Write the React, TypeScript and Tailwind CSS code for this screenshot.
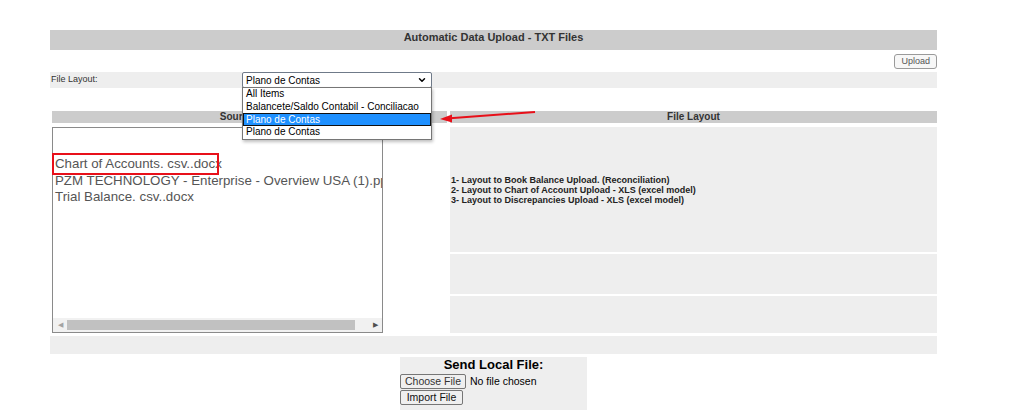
import { ChevronDown } from 'lucide-react';

const options = ['All Items', 'Balancete/Saldo Contabil - Conciliacao', 'Plano de Contas', 'Plano de Contas'];

const files = [
  'Chart of Accounts. csv..docx',
  'PZM TECHNOLOGY - Enterprise - Overview USA (1).pptx',
  'Trial Balance. csv..docx',
];

const layouts = [
  '1- Layout to Book Balance Upload. (Reconciliation)',
  '2- Layout to Chart of Account Upload - XLS (excel model)',
  '3- Layout to Discrepancies Upload - XLS (excel model)',
];

export default function App() {
  return (
    <div className="relative h-[410px] overflow-hidden bg-white pt-[30px] font-['Liberation_Sans',Arial,sans-serif] text-[#222]">
      <div className="ml-[50px] w-[887px]">
        {/* title bar */}
        <div className="h-[20px] bg-[#cccccc] pt-[1px] text-center text-[11px] leading-[13px] font-bold text-[#333]">
          Automatic Data Upload - TXT Files
        </div>

        <div className="flex h-[22px] items-center justify-end">
          <button className="h-[15px] rounded-[3px] border border-[#9a9a9a] bg-[#f7f7f7] px-[6px] text-[9px] leading-none text-[#555]">
            Upload
          </button>
        </div>

        {/* file layout row */}
        <div className="flex h-[16px] items-center bg-[#eeeeee] text-[9px] text-[#333]">
          <span className="w-[192px] pl-[1px]">File Layout:</span>
          <div className="relative z-10 w-[190px]">
            <div className="flex h-[16px] items-center justify-between rounded-[2px] border border-[#6f7a89] bg-white pr-[4px] pl-[3px] text-[10px] text-black">
              <span>Plano de Contas</span>
              <ChevronDown size={10} strokeWidth={3.5} className="text-black" />
            </div>
            <div className="absolute top-[15px] left-0 w-full border border-[#767676] bg-white shadow-[1px_2px_3px_rgba(0,0,0,0.25)]">
              {options.map((o, i) => (
                <div
                  key={i}
                  className={
                    i === 2
                      ? 'h-[13px] border border-[#111] bg-[#1e90ff] pl-[2px] text-[10px] leading-[11px] text-white'
                      : 'h-[12.5px] pl-[3px] text-[10px] leading-[12.5px] text-black'
                  }
                >
                  {o}
                </div>
              ))}
            </div>
          </div>
        </div>

        {/* section headers */}
        <div className="mt-[23px] flex h-[12px] gap-[3px] text-[10px] leading-[12px] font-bold text-[#333]">
          <div className="ml-[2px] w-[395px] bg-[#cccccc] text-center">Source Files</div>
          <div className="w-[487px] bg-[#cccccc] text-center">File Layout</div>
        </div>

        <div className="mt-[4px] flex h-[206px] gap-[3px]">
          <div className="ml-[2px] w-[395px]">
            <div className="relative flex h-full w-[331px] flex-col border border-[#8a8a8a] bg-white">
              <div className="flex-1 overflow-hidden pt-[28px] pl-[2px] text-[13.3px] leading-[16.5px] whitespace-nowrap text-[#555]">
                {files.map((f) => (
                  <div key={f}>{f}</div>
                ))}
              </div>
              <div className="flex h-[14px] items-center bg-[#f1f1f1]">
                <span className="w-[14px] text-center text-[7px] text-[#a3a3a3]">◀</span>
                <div className="h-[10px] w-[288px] bg-[#c1c1c1]" />
                <div className="flex-1" />
                <span className="w-[14px] text-center text-[7px] text-[#505050]">▶</span>
              </div>
              <div className="absolute top-[25px] left-[-1px] h-[22px] w-[167px] border-2 border-[#e8101a]" />
            </div>
          </div>

          <div className="flex w-[487px] flex-col gap-[2px]">
            <div className="flex h-[125px] flex-col justify-center bg-[#eeeeee] pl-[1px] text-[9px] leading-[10px] font-bold text-[#222]">
              {layouts.map((l) => (
                <div key={l}>{l}</div>
              ))}
            </div>
            <div className="h-[40px] bg-[#eeeeee]" />
            <div className="h-[37px] bg-[#eeeeee]" />
          </div>
        </div>

        <div className="mt-[3px] h-[18px] bg-[#eeeeee]" />

        {/* send local file */}
        <div className="mx-auto mt-[3px] flex h-[60px] w-[187px] flex-col items-start gap-[1px] bg-[#eeeeee]">
          <div className="w-full text-center text-[13px] leading-[16px] font-bold text-black">Send Local File:</div>
          <div className="flex h-[15px] items-center gap-[4px]">
            <button className="h-[15px] w-[66px] rounded-[2px] border border-[#767676] bg-[#efefef] text-[10.5px] leading-none text-[#333]">
              Choose File
            </button>
            <span className="text-[10.5px] leading-none text-black">No file chosen</span>
          </div>
          <button className="h-[15px] w-[63px] rounded-[2px] border border-[#767676] bg-[#efefef] text-[10.5px] leading-none text-[#111]">
            Import File
          </button>
        </div>
      </div>

      {/* annotation arrow */}
      <svg className="pointer-events-none absolute top-0 left-0" width="1024" height="410">
        <line x1="535" y1="112" x2="450" y2="118.2" stroke="#e8101a" strokeWidth="2" />
        <polygon points="440,119 452,114.6 452,122.6" fill="#e8101a" />
      </svg>
    </div>
  );
}
